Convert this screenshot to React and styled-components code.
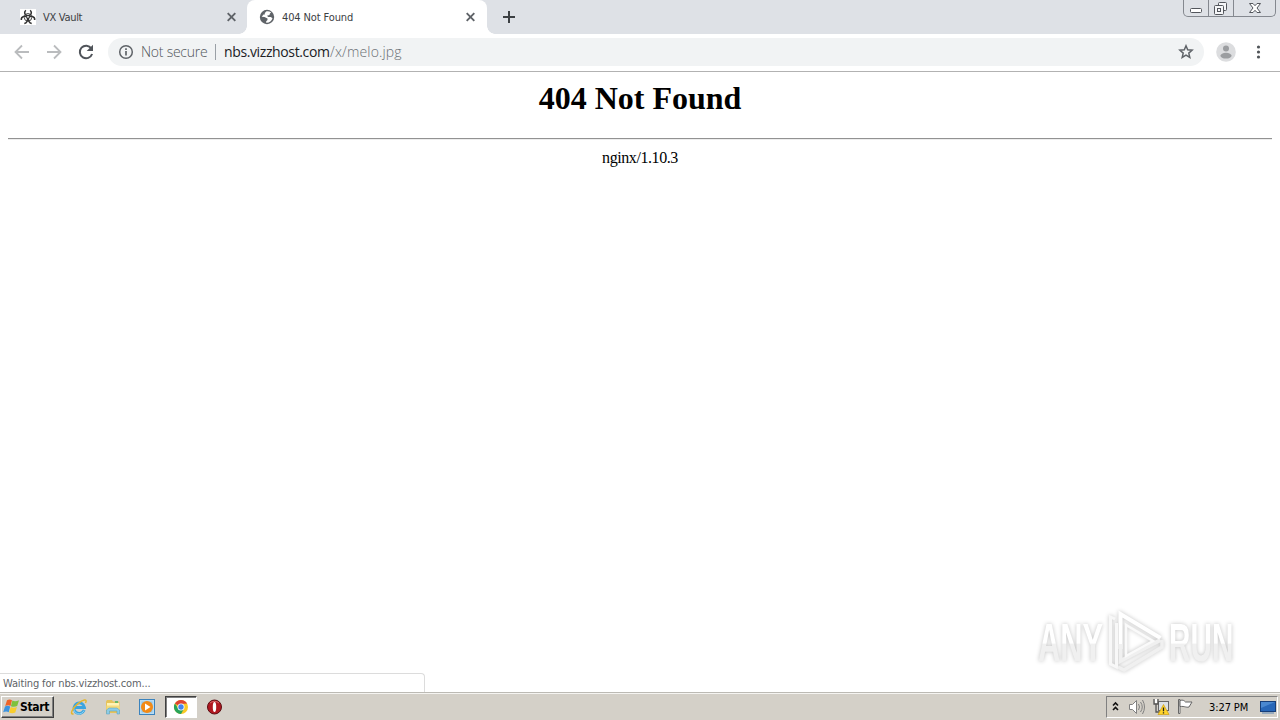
import React from "react";
import styled, { createGlobalStyle } from "styled-components";

const GlobalStyle = createGlobalStyle`
  * {
    box-sizing: border-box;
  }
  body {
    margin: 0;
    overflow: hidden;
    background: #fff;
  }
  svg {
    display: block;
    flex: none;
  }
`;

const Screen = styled.div`
  width: 1280px;
  height: 720px;
  display: flex;
  flex-direction: column;
  overflow: hidden;
  background: #fff;
  font-family: "DejaVu Sans Condensed", "DejaVu Sans", sans-serif;
  font-stretch: condensed;
`;

const TabStrip = styled.div`
  height: 34px;
  flex: none;
  display: flex;
  background: #dee1e6;
`;

const Tab = styled.div`
  position: relative;
  width: ${(props) => (props.$active ? "240px" : "247px")};
  height: 34px;
  padding: 0 ${(props) => (props.$active ? "11px 0 12px" : "10px 0 20px")};
  display: flex;
  align-items: center;
  background: ${(props) => (props.$active ? "#fff" : "transparent")};
  border-radius: 8px 8px 0 0;
  &::before,
  &::after {
    content: "";
    display: ${(props) => (props.$active ? "block" : "none")};
    position: absolute;
    bottom: 0;
    width: 8px;
    height: 8px;
  }
  &::before {
    left: -8px;
    background: radial-gradient(circle at 0 0, transparent 7.5px, #fff 8px);
  }
  &::after {
    right: -8px;
    background: radial-gradient(circle at 100% 0, transparent 7.5px, #fff 8px);
  }
`;

const TabTitle = styled.span`
  flex: 1;
  margin-left: 7px;
  padding-top: 1px;
  font-size: 11px;
  line-height: 14px;
  letter-spacing: ${(props) => props.$spacing};
  color: #3c4043;
  white-space: nowrap;
`;

const NewTab = styled.div`
  width: 44px;
  display: flex;
  align-items: center;
  justify-content: center;
`;

const WindowButtons = styled.div`
  height: 17px;
  margin: 0 4px 0 auto;
  display: flex;
  border: 1px solid #84888f;
  border-top: 0;
  border-radius: 0 0 5px 5px;
`;

const WindowButton = styled.div`
  width: ${(props) => props.$width};
  display: flex;
  justify-content: center;
  border-right: ${(props) => (props.$last ? "0" : "1px solid #84888f")};
`;

const Toolbar = styled.div`
  height: 38px;
  flex: none;
  padding: 0 12px 1px 12px;
  display: flex;
  align-items: center;
  background: #fff;
  border-bottom: 1px solid #b2b2b2;
`;

const NavButtons = styled.div`
  width: 96px;
  display: flex;
  gap: 12px;
`;

const Omnibox = styled.div`
  width: 1096px;
  height: 28px;
  padding: 0 10px;
  display: flex;
  align-items: center;
  border-radius: 14px;
  background: #f1f3f4;
  font-family: "Open Sans", "Noto Sans", sans-serif;
  font-stretch: normal;
  font-weight: 300;
  font-size: 14px;
  line-height: 20px;
  white-space: nowrap;
`;

const Security = styled.span`
  width: 67px;
  margin-left: 7px;
  letter-spacing: -0.25px;
  color: #50555a;
`;

const Separator = styled.span`
  width: 1px;
  height: 16px;
  margin: 0 8px 0 7px;
  background: #9aa0a6;
`;

const Host = styled.span`
  width: 106px;
  letter-spacing: -0.38px;
  font-weight: 400;
  color: #202124;
`;

const Path = styled.span`
  flex: 1;
  letter-spacing: 0.15px;
  color: #6b7075;
`;

const Avatar = styled.div`
  margin-left: 12px;
`;

const Menu = styled.div`
  margin-left: 14px;
`;

const Page = styled.main`
  position: relative;
  height: 620px;
  flex: none;
  padding: 0 8px;
  background: #fff;
  font-family: "Liberation Serif", serif;
  text-align: center;
  color: #000;
`;

const Heading = styled.h1`
  margin: 0;
  padding-top: 8px;
  height: 66px;
  font-size: 32px;
  line-height: 37px;
`;

const Rule = styled.hr`
  margin: 0;
  border: 0;
  border-top: 1px solid #929292;
  border-bottom: 1px solid #ededed;
`;

const Server = styled.p`
  margin: 9px 0 0;
  font-size: 16px;
  line-height: 18px;
  letter-spacing: -0.42px;
`;

const Status = styled.div`
  position: absolute;
  left: 0;
  bottom: 0;
  width: 425px;
  height: 19px;
  padding: 3px 0 0 3px;
  border: 1px solid #dcdcdc;
  border-width: 1px 1px 0 0;
  border-radius: 0 4px 0 0;
  background: #fff;
  font-family: "DejaVu Sans Condensed", "DejaVu Sans", sans-serif;
  font-size: 11px;
  line-height: 14px;
  letter-spacing: -0.14px;
  text-align: left;
  color: #606367;
`;

const Watermark = styled.div`
  position: absolute;
  left: 1038px;
  top: 537px;
  display: flex;
  align-items: center;
  filter: drop-shadow(0 0 2px rgba(0, 0, 0, 0.24));
`;

const Word = styled.span`
  width: 120px;
  height: 54px;
  margin-right: ${(props) => props.$width - 120}px;
  font-family: "Liberation Sans", sans-serif;
  font-size: 54px;
  font-weight: 700;
  line-height: 54px;
  text-align: left;
  color: transparent;
  background: linear-gradient(#fff 52%, #f0f0f0 54%);
  background-clip: text;
  transform: scaleX(${(props) => props.$scale});
  transform-origin: 0 50%;
`;

const Taskbar = styled.footer`
  height: 28px;
  flex: none;
  padding: 2px 2px 2px 1px;
  display: flex;
  align-items: center;
  background: #d4d0c8;
  border-top: 1px solid #bcbab4;
  box-shadow: inset 0 1px #f5f4f1;
`;

const StartButton = styled.div`
  width: 53px;
  height: 22px;
  padding-left: 1px;
  display: flex;
  align-items: center;
  border: 1px solid;
  border-color: #fff #404040 #404040 #fff;
  box-shadow: inset -1px -1px #808080;
  font-size: 12px;
  font-weight: 700;
  letter-spacing: -0.35px;
  color: #000;
`;

const QuickLaunch = styled.div`
  margin-left: 8px;
  display: flex;
  align-items: center;
  gap: 1px;
`;

const Launcher = styled.div`
  width: ${(props) => (props.$pressed ? "32px" : "33px")};
  height: 22px;
  display: flex;
  align-items: center;
  justify-content: center;
  border: 1px solid transparent;
  ${(props) =>
    props.$pressed &&
    `
    margin-left: 1px;
    background: #fff;
    border-color: #404040 #fff #fff #404040;
    box-shadow: inset 1px 1px #808080;
  `}
`;

const Tray = styled.div`
  width: 172px;
  height: 22px;
  margin-left: auto;
  padding-left: 4px;
  display: flex;
  align-items: center;
  border: 1px solid;
  border-color: #808080 #fff #fff #808080;
`;

const TrayIcons = styled.div`
  width: 98px;
  display: flex;
  align-items: center;
  gap: 8px;
`;

const Clock = styled.span`
  width: 51px;
  padding-top: 1px;
  font-size: 11px;
  letter-spacing: -0.1px;
  white-space: nowrap;
  color: #000;
`;

const BiohazardIcon = () => (
  <svg width="16" height="16" viewBox="0 0 16 16">
    <rect width="16" height="16" fill="#fff" />
    <g fill="none" stroke="#333" strokeWidth="1.500">
      <path d="M5.800 1.200C3.700 3.300 4.600 6.700 8 6.700s4.300-3.400 2.200-5.500" />
      <path d="M1.300 11c-.4-3.700 4.400-4.800 5.900-2.300 1.200 2.400-.5 5.300-2.900 5.700" />
      <path d="M14.700 11c.4-3.700-4.400-4.800-5.900-2.300-1.200 2.400.5 5.300 2.900 5.700" />
      <circle cx="8" cy="8.300" r="3.800" strokeWidth=".9" />
    </g>
    <circle cx="8" cy="8" r=".8" fill="#fff" />
  </svg>
);

const GlobeIcon = () => (
  <svg width="16" height="16" viewBox="0 0 16 16">
    <circle cx="8" cy="8" r="7.200" fill="#5f6368" />
    <path
      d="M7.500 2.300 5.800 4v1.500H4.500L2.700 7.700l2.800.2 3 1.600v1.600l-1.300 1.200v1.500c3 .2 5.600-1.600 6.300-4.500l-1.700-1.300H9.200L8 6.700l2.500-.6.400-1.700 1.300-.8A6.300 6.300 0 0 0 7.500 2.300Z"
      fill="#fff"
    />
  </svg>
);

const CloseIcon = () => (
  <svg width="11" height="11" viewBox="0 0 11 11">
    <path d="m1.700 1.200 7.600 7.600m0-7.600L1.700 8.800" stroke="#5f6368" strokeWidth="1.900" />
  </svg>
);

const PlusIcon = () => (
  <svg width="14" height="14" viewBox="0 0 14 14">
    <path d="M7 1v12M1 7h12" stroke="#3c4043" strokeWidth="2" />
  </svg>
);

const MinimizeIcon = () => (
  <svg width="24" height="16" viewBox="0 0 24 16">
    <rect x="6.500" y="8.500" width="11" height="4" rx="1" fill="#fff" stroke="#53565c" />
  </svg>
);

const RestoreIcon = () => (
  <svg width="24" height="16" viewBox="0 0 24 16">
    <g fill="#f5f6f8" stroke="#53565c">
      <rect x="9.500" y="2.500" width="8" height="8" rx="1" />
      <rect x="5.500" y="5.500" width="9" height="9" rx="1" />
      <rect x="8.500" y="8.500" width="3" height="3" />
    </g>
  </svg>
);

const WindowCloseIcon = () => (
  <svg width="24" height="16" viewBox="0 0 24 16">
    <path
      d="M6.500 3.500h3.500l2 2.200 2-2.200h3.500L14 8l3.500 4.500H14l-2-2.200-2 2.200H6.500L10 8Z"
      fill="#fff"
      stroke="#53565c"
      strokeLinejoin="round"
    />
  </svg>
);

const ArrowIcon = ({ forward }) => (
  <svg width="20" height="20" viewBox="0 0 20 20">
    <path
      d={forward ? "M3 10h13M10 3.500l6.500 6.500-6.500 6.500" : "M17 10H4m6-6.500L3.500 10l6.500 6.500"}
      fill="none"
      stroke="#babcbe"
      strokeWidth="1.800"
    />
  </svg>
);

const ReloadIcon = () => (
  <svg width="20" height="20" viewBox="0 0 20 20">
    <path d="M15.300 6.300A6.300 6.300 0 1 0 16.100 12" fill="none" stroke="#50545a" strokeWidth="2" />
    <path d="M17 2.700V9h-6.300Z" fill="#50545a" />
  </svg>
);

const InfoIcon = () => (
  <svg width="16" height="16" viewBox="0 0 16 16">
    <circle cx="8" cy="8" r="6.300" fill="none" stroke="#5f6368" strokeWidth="1.500" />
    <path d="M8 7v4.500M8 4.300v1.600" stroke="#5f6368" strokeWidth="1.700" />
  </svg>
);

const StarIcon = () => (
  <svg width="16" height="16" viewBox="0 0 16 16">
    <path
      d="m8 1.800 1.700 4 4.400.4-3.300 2.900 1 4.300L8 11.200l-3.800 2.200 1-4.300-3.300-2.900 4.400-.4Z"
      fill="none"
      stroke="#5f6368"
      strokeWidth="1.500"
    />
  </svg>
);

const AvatarIcon = () => (
  <svg width="20" height="20" viewBox="0 0 20 20">
    <circle cx="10" cy="10" r="9.800" fill="#dcdddf" />
    <circle cx="10" cy="6.500" r="3" fill="#9b9da0" />
    <ellipse cx="10" cy="13.700" rx="5.600" ry="2.900" fill="#9b9da0" />
  </svg>
);

const DotsIcon = () => (
  <svg width="16" height="16" viewBox="0 0 16 16" fill="#505458">
    <circle cx="8.500" cy="3" r="1.600" />
    <circle cx="8.500" cy="8" r="1.600" />
    <circle cx="8.500" cy="13" r="1.600" />
  </svg>
);

const PlayLogo = () => (
  <svg width="65" height="66" viewBox="-2 0 65 66" fill="none" strokeWidth="4">
    <path d="M14.500 40V5l40 24" stroke="#fff" />
    <path d="M14.500 35v17l40-21" stroke="#f0f0f0" />
    <path d="M9 10 4.500 8V55l6 3V14" stroke="#f8f8f8" strokeWidth="3" />
    <path d="M20 47V16l27 16Z" stroke="#fafafa" strokeWidth="2.500" />
    <path d="m12 58 6 3 38-23v-7" stroke="#f0f0f0" strokeWidth="3.500" />
  </svg>
);

const WindowsIcon = () => (
  <svg width="17" height="17" viewBox="0 0 17 17">
    <path d="M4 2.200c2-1 3.500-.9 5 0L7.500 7.900C6 7 4.300 7 2.200 8Z" fill="#ef6428" />
    <path d="M9.400 2.600c2 1 4.300.8 6.600-.4L14.200 8c-2 1-4.400 1-6.300.2Z" fill="#7ec13d" />
    <path d="M2 8.500c2-1 3.600-.9 5.200 0l-1.500 5.700C4 13.300 2.300 13.300.2 14.200Z" fill="#3c93df" />
    <path d="M7.700 9c2 1 4.100.9 6.200 0l-1.600 5.500c-2 1.100-4.300 1-6.200.1Z" fill="#f8cd2e" />
  </svg>
);

const ExplorerIcon = () => (
  <svg width="18" height="18" viewBox="0 0 18 18" fill="none">
    <path d="M14.200 12A5.300 5.300 0 1 1 14.500 9.500H5" stroke="#3aa4e0" strokeWidth="2.800" />
    <path d="M14 12.500A5.300 5.300 0 0 1 4 9" stroke="#8bd3f3" strokeWidth="1" />
    <path d="M3.500 15.800C-.5 17 2 10.500 8 5.700 12.500 2 18 0 15.500 5" stroke="#e5b52d" strokeWidth="1.500" />
  </svg>
);

const FolderIcon = () => (
  <svg width="18" height="18" viewBox="0 0 18 18">
    <path d="M2 3.500 3 2h5l1 1.500h6.500V15H2Z" fill="#e6c35b" />
    <path d="M3 5h12v7H3Z" fill="#fff3b5" />
    <path d="M2.500 7.500h13v4h-13Z" fill="#f5db7c" />
    <path d="M2.500 12 5 10h8l2.500 2v4H13v-3H5.500v3h-3Z" fill="#8bcbe8" stroke="#4d9dc2" strokeWidth=".5" />
    <path d="M11 3h3v2h-3Z" fill="#69b867" />
  </svg>
);

const MediaIcon = () => (
  <svg width="18" height="18" viewBox="0 0 18 18">
    <rect x="1.500" y="1.500" width="15" height="15" fill="#b8dcf3" stroke="#3b83bd" />
    <rect x="3.500" y="3.500" width="11" height="11" fill="#8fc4e8" />
    <circle cx="9" cy="9" r="6" fill="#f28a16" />
    <path d="m7 5.500 5.500 3.500L7 12.500Z" fill="#fff" />
  </svg>
);

const ChromeIcon = () => (
  <svg width="16" height="16" viewBox="0 0 16 16">
    <circle cx="8" cy="8" r="7" fill="#f9c926" />
    <path d="M8 8 1.900 4.500A7 7 0 0 1 14.100 4.500L8 5Z" fill="#df4432" />
    <path d="M1.900 4.500A7 7 0 0 0 8 15l3-5.300L5.200 9.600Z" fill="#28a45a" />
    <circle cx="8" cy="8" r="3.500" fill="#fff" />
    <circle cx="8" cy="8" r="2.700" fill="#4384ed" />
  </svg>
);

const OperaIcon = () => (
  <svg width="18" height="18" viewBox="0 0 18 18">
    <circle cx="8.500" cy="9" r="7" fill="#b11820" stroke="#5b0d12" />
    <path d="M4 5a7 7 0 0 1 9 0" stroke="#da686b" fill="none" />
    <ellipse cx="8.500" cy="9" rx="1.700" ry="5" fill="#fff" />
  </svg>
);

const ChevronsIcon = () => (
  <svg width="9" height="12" viewBox="0 0 9 12" fill="none" stroke="#111" strokeWidth="1.600">
    <path d="m2 4.500 2.500-2.500L7 4.500M2 9l2.500-2.500L7 9" />
  </svg>
);

const SpeakerIcon = () => (
  <svg width="17" height="16" viewBox="0 0 17 16" fill="none" stroke="#808080">
    <path d="M1.500 5.500h3l4-4v13l-4-4h-3Z" fill="#fff" />
    <path d="M10.500 5q2 3 0 6m2-8q3.500 5 0 10m2-12q4 7 0 14" />
  </svg>
);

const NetworkIcon = () => (
  <svg width="17" height="17" viewBox="0 0 17 17">
    <rect x="5.500" y="3.500" width="10" height="9" fill="#dce1e5" stroke="#666" />
    <path d="M1 1v5h4V1M3 6v8h7" fill="none" stroke="#555" strokeWidth="1.300" />
    <path d="M2 1v4h2V1" fill="#fff" />
    <path d="m10.500 6.500 5.500 10H5Z" fill="#ffd42a" stroke="#c99600" strokeWidth=".6" />
    <path d="M10.500 9.500v3.700m0 1v1.300" stroke="#222" strokeWidth="1.300" />
  </svg>
);

const FlagIcon = () => (
  <svg width="17" height="17" viewBox="1 0 17 17" fill="#fff" stroke="#666">
    <path d="M1.500 1.500h1.500v14H1.500Z" />
    <path d="M3 2.500c3-1 4 0 5.500 1.500h6.500l-3 5c-3 .8-4-1-9-.5Z" />
  </svg>
);

const DesktopIcon = () => (
  <svg width="16" height="16" viewBox="0 0 16 16">
    <rect x=".5" y="2.500" width="15" height="10" fill="#2867b8" stroke="#173e78" />
    <path d="M1 3h14L1 9Z" fill="#4a88d0" />
    <path d="M2 14h12" stroke="#5d86b4" />
  </svg>
);

const App = () => (
  <>
    <GlobalStyle />
    <Screen>
      <TabStrip>
        <Tab>
          <BiohazardIcon />
          <TabTitle $spacing="-0.3px">VX Vault</TabTitle>
          <CloseIcon />
        </Tab>
        <Tab $active>
          <GlobeIcon />
          <TabTitle $spacing="-0.12px">404 Not Found</TabTitle>
          <CloseIcon />
        </Tab>
        <NewTab>
          <PlusIcon />
        </NewTab>
        <WindowButtons>
          <WindowButton $width="25px">
            <MinimizeIcon />
          </WindowButton>
          <WindowButton $width="25px">
            <RestoreIcon />
          </WindowButton>
          <WindowButton $width="41px" $last>
            <WindowCloseIcon />
          </WindowButton>
        </WindowButtons>
      </TabStrip>
      <Toolbar>
        <NavButtons>
          <ArrowIcon />
          <ArrowIcon forward />
          <ReloadIcon />
        </NavButtons>
        <Omnibox>
          <InfoIcon />
          <Security>Not secure</Security>
          <Separator />
          <Host>nbs.vizzhost.com</Host>
          <Path>/x/melo.jpg</Path>
          <StarIcon />
        </Omnibox>
        <Avatar>
          <AvatarIcon />
        </Avatar>
        <Menu>
          <DotsIcon />
        </Menu>
      </Toolbar>
      <Page>
        <Heading>404 Not Found</Heading>
        <Rule />
        <Server>nginx/1.10.3</Server>
        <Watermark>
          <Word $width={66} $scale={0.57}>ANY</Word>
          <PlayLogo />
          <Word $width={66} $scale={0.55}>RUN</Word>
        </Watermark>
        <Status>Waiting for nbs.vizzhost.com...</Status>
      </Page>
      <Taskbar>
        <StartButton>
          <WindowsIcon />
          Start
        </StartButton>
        <QuickLaunch>
          <Launcher>
            <ExplorerIcon />
          </Launcher>
          <Launcher>
            <FolderIcon />
          </Launcher>
          <Launcher>
            <MediaIcon />
          </Launcher>
          <Launcher $pressed>
            <ChromeIcon />
          </Launcher>
          <Launcher>
            <OperaIcon />
          </Launcher>
        </QuickLaunch>
        <Tray>
          <TrayIcons>
            <ChevronsIcon />
            <SpeakerIcon />
            <NetworkIcon />
            <FlagIcon />
          </TrayIcons>
          <Clock>3:27 PM</Clock>
          <DesktopIcon />
        </Tray>
      </Taskbar>
    </Screen>
  </>
);

export default App;
